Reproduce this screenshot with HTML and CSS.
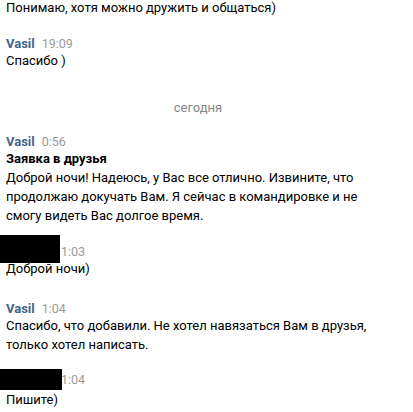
FILE: index.html
```html
<!DOCTYPE html>
<html lang="ru">
<head>
<meta charset="utf-8">
<link rel="stylesheet" href="styles.css">
</head>
<body>
<div class="chat">
  <div class="msg first">
    <div class="text">Понимаю, хотя можно дружить и общаться)</div>
  </div>
  <div class="msg">
    <div class="head"><span class="name">Vasil</span><span class="time">19:09</span></div>
    <div class="text">Спасибо )</div>
  </div>
  <div class="divider">сегодня</div>
  <div class="msg nopad">
    <div class="head"><span class="name">Vasil</span><span class="time">0:56</span></div>
    <div class="text"><b class="subject">Заявка в друзья</b></div>
    <div class="text">Доброй ночи! Надеюсь, у Вас все отлично. Извините, что продолжаю докучать Вам. Я сейчас в командировке и не смогу видеть Вас долгое время.</div>
  </div>
  <div class="msg">
    <div class="head"><span class="name hidden">Name</span><span class="time">1:03</span><span class="blackout b1"></span></div>
    <div class="text">Доброй ночи)</div>
  </div>
  <div class="msg wide">
    <div class="head"><span class="name">Vasil</span><span class="time">1:04</span></div>
    <div class="text">Спасибо, что добавили. Не хотел навязаться Вам в друзья, только хотел написать.</div>
  </div>
  <div class="msg tight">
    <div class="head"><span class="name hidden">Name</span><span class="time">1:04</span><span class="blackout b2"></span></div>
    <div class="text lower">Пишите)</div>
  </div>
</div>
</body>
</html>
```
FILE: styles.css
```css
html, body {
  margin: 0;
  padding: 0;
  background: #ffffff;
}
body {
  font-family: Roboto, "Liberation Sans", Arial, sans-serif;
  font-size: 13px;
  color: #000000;
  overflow: hidden;
}
.chat {
  width: 396px;
  padding: 0 6px;
  box-sizing: border-box;
  display: flex;
  flex-direction: column;
}
.msg {
  padding-top: 20px;
}
.msg.first {
  padding-top: 0;
  margin-top: -2px;
}
.msg.nopad {
  padding-top: 0;
}
.msg.wide {
  padding-top: 23.5px;
}
.msg.tight {
  padding-top: 19px;
}
.head {
  line-height: 14px;
  height: 14px;
  position: relative;
  white-space: nowrap;
}
.name {
  font-weight: bold;
  color: #42648b;
  font-size: 13px;
}
.name.hidden {
  visibility: hidden;
  display: inline-block;
  width: 48px;
  font-size: 1px;
}
.time {
  color: #9a9a9a;
  font-size: 12.5px;
  margin-left: 7px;
}
.text {
  line-height: 19px;
}
.text.lower {
  margin-top: 3px;
}
.subject {
  font-weight: bold;
}
.divider {
  line-height: 19px;
  text-align: center;
  color: #868686;
  margin: 28px 0 18px;
}
.blackout {
  position: absolute;
  left: -6px;
  background: #000;
}
.b1 {
  top: -10px;
  width: 60px;
  height: 28px;
}
.b2 {
  top: -3.5px;
  width: 62px;
  height: 21px;
}
```
